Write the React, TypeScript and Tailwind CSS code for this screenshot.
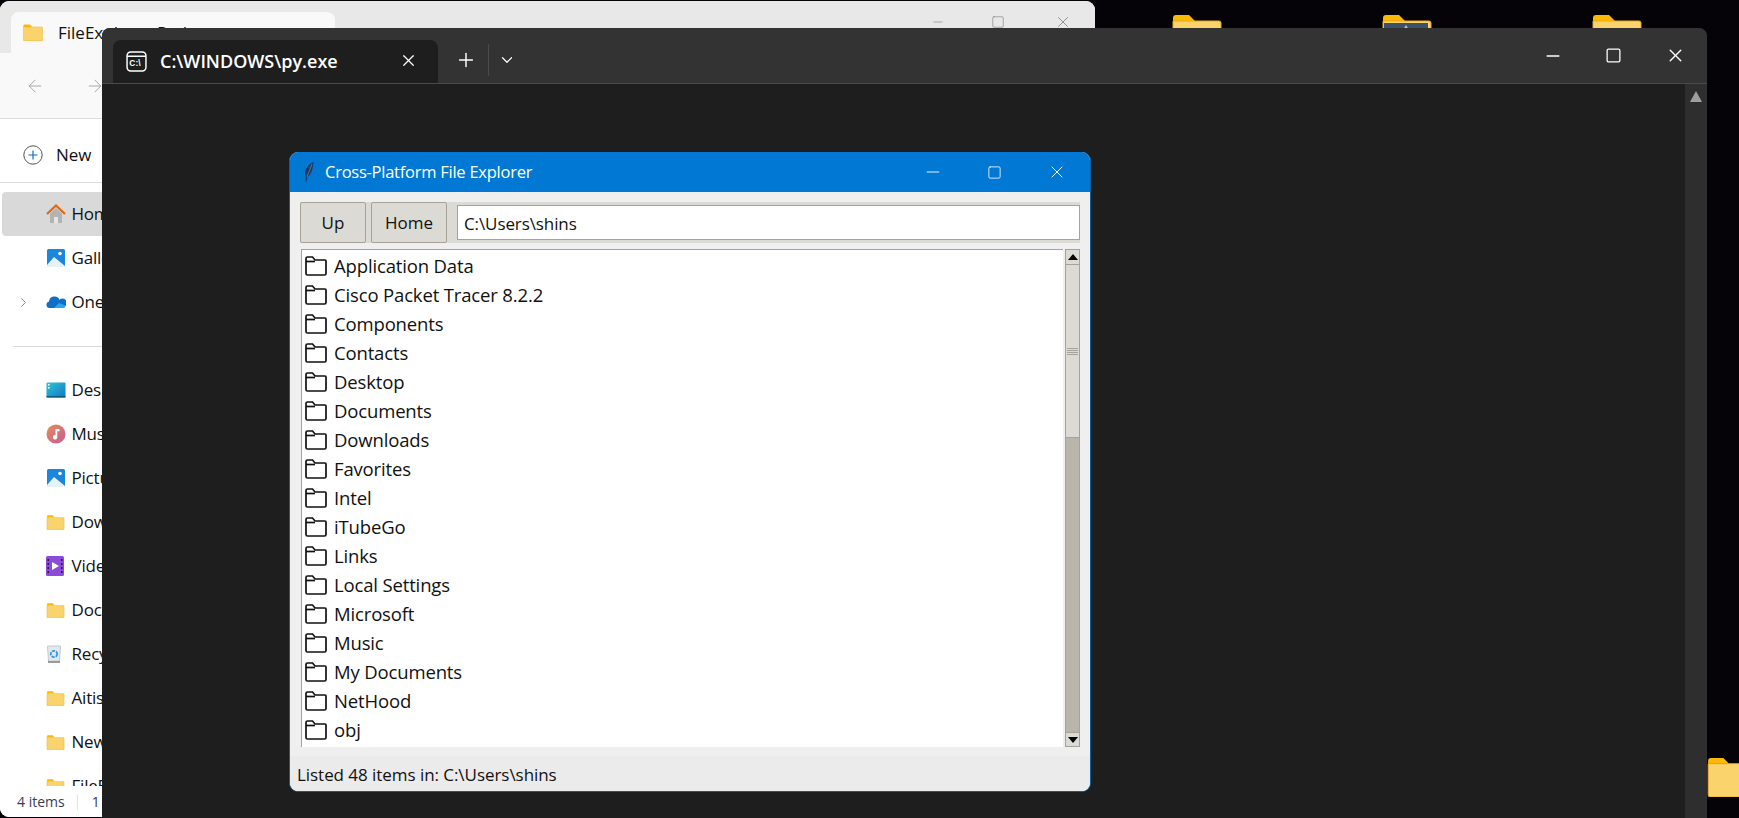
import { ChevronDown, ChevronRight, Plus, X, Minus, Square, ArrowLeft, ArrowRight } from "lucide-react";

const font = { fontFamily: '"Open Sans", "Noto Sans", sans-serif' };

const entries = [
  "Application Data",
  "Cisco Packet Tracer 8.2.2",
  "Components",
  "Contacts",
  "Desktop",
  "Documents",
  "Downloads",
  "Favorites",
  "Intel",
  "iTubeGo",
  "Links",
  "Local Settings",
  "Microsoft",
  "Music",
  "My Documents",
  "NetHood",
  "obj",
];

const YellowFolder = ({ className, inner }: { className: string; inner?: "doc" | "photo" }) => (
  <svg viewBox="0 0 50 42" className={className}>
    <path d="M1 4a3 3 0 0 1 3-3h13l6 6h-22z" fill="#fdb900" />
    <path d="M1 7h46a2 2 0 0 1 2 2v31a2 2 0 0 1-2 2H3a2 2 0 0 1-2-2z" fill="#fbd36c" stroke="#e9a91c" strokeWidth="1" />
    {inner === "doc" && <path d="M16 16h10l6 6v20H16z" fill="#fdf6e3" />}
    {inner === "photo" && (
      <>
        <rect x="2" y="9" width="44" height="30" fill="#3d5268" />
        <path d="M6 39l18-28 7 11 5-3 9 20z" fill="#a9bccd" />
      </>
    )}
  </svg>
);

const HomeIcon = () => (
  <svg viewBox="0 0 20 20" className="h-[20px] w-[20px]">
    <path d="M4 9.5V19h12V9.5L10 4z" fill="#b3b3b3" />
    <path d="M8 19v-6h4v6z" fill="#e6e6e6" />
    <path d="M1 10l9-8.5 9 8.5" fill="none" stroke="#e0680f" strokeWidth="2.2" />
  </svg>
);

const GalleryIcon = () => (
  <svg viewBox="0 0 20 20" className="h-[20px] w-[20px]">
    <rect x="1" y="1" width="18" height="18" rx="1.5" fill="#1c86dc" />
    <circle cx="14" cy="5.5" r="1.8" fill="#fff" />
    <path d="M1 17l7-8 11 9v1H1z" fill="#e6f2fb" />
  </svg>
);

const CloudIcon = () => (
  <svg viewBox="0 0 20 14" className="h-[14px] w-[20px]">
    <path d="M3.5 13A3.3 3.3 0 0 1 3 6.5 5.5 5.5 0 0 1 13.5 4.8 4.2 4.2 0 0 1 19.5 11a3 3 0 0 1-2.5 2z" fill="#0f6fc6" />
    <path d="M8 13l5-5 6.5 2.5A3 3 0 0 1 17 13z" fill="#2ba6ea" />
  </svg>
);

const DesktopIcon = () => (
  <svg viewBox="0 0 20 16" className="h-[16px] w-[20px]">
    <defs>
      <linearGradient id="desk" x1="0" y1="0" x2="1" y2="1">
        <stop offset="0" stopColor="#2cc4d8" />
        <stop offset="1" stopColor="#1478c0" />
      </linearGradient>
    </defs>
    <rect x="0.5" y="0.5" width="19" height="15" rx="1" fill="url(#desk)" />
    <rect x="0.5" y="14" width="19" height="1.5" fill="#0b5a84" />
    <rect x="2" y="2" width="1.6" height="1.6" fill="#fff" />
    <rect x="2" y="5" width="1.6" height="1.6" fill="#fff" />
  </svg>
);

const MusicIcon = () => (
  <svg viewBox="0 0 20 20" className="h-[20px] w-[20px]">
    <defs>
      <linearGradient id="music" x1="0" y1="0" x2="1" y2="1">
        <stop offset="0" stopColor="#ec8a55" />
        <stop offset="1" stopColor="#c05f9a" />
      </linearGradient>
    </defs>
    <circle cx="10" cy="10" r="9.5" fill="url(#music)" />
    <path d="M9.5 5h4v2.2h-2.2v6a2.2 2.2 0 1 1-1.8-2.1z" fill="#fff" />
  </svg>
);

const VideoIcon = () => (
  <svg viewBox="0 0 18 20" className="h-[20px] w-[18px]">
    <rect width="18" height="20" rx="1.5" fill="#8b4ad8" />
    <path d="M6 6l7 4-7 4z" fill="#fff" />
    <path d="M1.5 3h1.5v2H1.5zm0 4h1.5v2H1.5zm0 4h1.5v2H1.5zm0 4h1.5v2H1.5zm13.5-12h1.5v2H15zm0 4h1.5v2H15zm0 4h1.5v2H15zm0 4h1.5v2H15z" fill="#2b1553" />
  </svg>
);

const BinIcon = () => (
  <svg viewBox="0 0 16 18" className="h-[18px] w-[16px]">
    <path d="M1.5 1h13l-1 15h-11z" fill="#e4e8ec" stroke="#b8bcc0" strokeWidth="0.8" />
    <rect x="2" y="16" width="12" height="2" fill="#9a9a9a" />
    <circle cx="8" cy="9" r="3.2" fill="none" stroke="#2a9ae6" strokeWidth="1.8" strokeDasharray="3.2 1" />
  </svg>
);

const smallFolder = <YellowFolder className="h-[15px] w-[19px]" />;

const sideTop = [
  { name: "Home", icon: <HomeIcon />, active: true },
  { name: "Gallery", icon: <GalleryIcon /> },
  { name: "OneDrive", icon: <CloudIcon />, chevron: true },
];

const sideBottom = [
  { name: "Desktop", icon: <DesktopIcon /> },
  { name: "Music", icon: <MusicIcon /> },
  { name: "Pictures", icon: <GalleryIcon /> },
  { name: "Downloads", icon: smallFolder },
  { name: "Videos", icon: <VideoIcon /> },
  { name: "Documents", icon: smallFolder },
  { name: "Recycle Bin", icon: <BinIcon /> },
  { name: "Aitisal", icon: smallFolder },
  { name: "New folder", icon: smallFolder },
  { name: "FileExplorer", icon: smallFolder },
];

type SideRow = { name: string; icon: React.ReactNode; active?: boolean; chevron?: boolean };

const SideItem = ({ item }: { item: SideRow }) => (
  <div className={`relative ml-[2px] flex h-[44px] shrink-0 items-center rounded-l-[4px] pl-[44px] text-[17px] tracking-[-0.2px] whitespace-nowrap text-[#111] ${item.active ? "bg-[#d9d9d9]" : ""}`}>
    {item.chevron && <ChevronRight className="absolute left-[14px] h-[15px] w-[15px] text-[#777]" strokeWidth={1.5} />}
    <span className="flex w-[25.5px] shrink-0 justify-start">{item.icon}</span>
    <span>{item.name}</span>
  </div>
);

const TkButton = ({ label, className }: { label: string; className: string }) => (
  <button className={`flex h-[41px] items-center justify-center rounded-[2px] border border-[#a5a298] bg-[#dcdad5] pt-[1px] text-[17px] text-[#111] ${className}`}>
    {label}
  </button>
);

const ListFolder = () => (
  <svg viewBox="0 0 22 20" className="h-[20px] w-[22px] shrink-0" fill="none" stroke="#111" strokeWidth="1.7">
    <path d="M1 5V2.5A1.5 1.5 0 0 1 2.5 1h5L10 4h10a1 1 0 0 1 1 1v12.5a1.5 1.5 0 0 1-1.5 1.5h-17A1.5 1.5 0 0 1 1 17.5z" />
    <path d="M1 5.5h9" />
  </svg>
);

const Feather = () => (
  <svg viewBox="0 0 10 20" className="h-[20px] w-[10px]">
    <path d="M9.5 0C4 2 1 7 1 12c0 1.5.5 2.5 1 3L1.5 19.5h1L3.5 15c3.5-2 6-9 6-15z" fill="#1c3c66" />
    <path d="M8 2L3 15" stroke="#7f9bbd" strokeWidth="0.6" />
  </svg>
);

const App = () => {
  return (
    <div className="relative h-[818px] w-[1739px] overflow-hidden bg-[#050308]" style={font}>
      {/* desktop icons */}
      <YellowFolder inner="doc" className="absolute top-[14px] left-[1172px] h-[42px] w-[50px]" />
      <YellowFolder inner="photo" className="absolute top-[14px] left-[1382px] h-[42px] w-[50px]" />
      <YellowFolder inner="doc" className="absolute top-[14px] left-[1592px] h-[42px] w-[50px]" />
      <YellowFolder className="absolute top-[757px] left-[1707px] h-[40px] w-[48px]" />
      <span className="absolute top-[812px] left-[1708px] text-[14px] whitespace-nowrap text-white">AWO</span>

      {/* file explorer window behind */}
      <div className="absolute top-[1px] left-0 flex h-[816px] w-[1095px] flex-col overflow-hidden rounded-t-[9px] rounded-bl-[9px] bg-white">
        <div className="relative flex h-[52px] shrink-0 items-end bg-[#e8e8e8] pl-[11px]">
          <div className="flex h-[41px] w-[324px] items-center rounded-t-[8px] bg-[#f9f9f9] pl-[12px] text-[17px] text-[#111]">
            <YellowFolder className="h-[17px] w-[20px]" />
            <span className="ml-[15px]">FileExplorer-Path</span>
            <X className="mr-[20px] ml-auto h-[14px] w-[14px] text-[#555]" />
          </div>
          <div className="ml-auto flex items-center self-start pt-[12px] text-[#777]">
            <Minus className="mr-[46px] h-[14px] w-[14px]" strokeWidth={1} />
            <Square className="mr-[49px] h-[14px] w-[14px]" strokeWidth={1} />
            <X className="mr-[23px] h-[18px] w-[18px]" strokeWidth={1} />
          </div>
        </div>
        <div className="flex h-[66px] shrink-0 items-center gap-[40px] border-b border-[#dcdcdc] bg-[#f9f9f9] pl-[25px] text-[#aaa]">
          <ArrowLeft className="h-[20px] w-[20px]" strokeWidth={1.2} />
          <ArrowRight className="h-[20px] w-[20px]" strokeWidth={1.2} />
        </div>
        <div className="flex h-[64px] shrink-0 items-center border-b border-[#dcdcdc] pt-[8px] pl-[23px] text-[17px] text-[#111]">
          <svg viewBox="0 0 20 20" className="h-[20px] w-[20px]">
            <circle cx="10" cy="10" r="9.2" fill="none" stroke="#555" strokeWidth="1" />
            <path d="M10 5.5v9M5.5 10h9" stroke="#0a6fc9" strokeWidth="1.2" />
          </svg>
          <span className="ml-[13px]">New</span>
        </div>
        <div className="flex min-h-0 flex-1 flex-col overflow-hidden pt-[9px]">
          {sideTop.map((item) => (
            <SideItem key={item.name} item={item} />
          ))}
          <div className="mt-[22px] mb-[21px] ml-[13px] h-px shrink-0 bg-[#d9d9d9]" />
          {sideBottom.map((item) => (
            <SideItem key={item.name} item={item} />
          ))}
        </div>
        <div className="flex h-[31px] shrink-0 items-center bg-white pl-[17px] text-[14px] text-[#3b3b55]">
          <span>4 items</span>
          <span className="mr-[14px] ml-[12px] h-[16px] w-px bg-[#e4e4e4]" />
          <span>1 item selected</span>
        </div>
      </div>

      {/* terminal window */}
      <div className="absolute top-[28px] left-[102px] flex h-[790px] w-[1605px] flex-col overflow-hidden rounded-t-[8px] bg-[#1e1e1e]">
        <div className="flex h-[56px] shrink-0 items-end border-b border-[#4a4a4a] bg-[#333333] pl-[11px] text-white">
          <div className="flex h-[43px] w-[325px] items-center rounded-t-[8px] bg-[#1e1e1e] pl-[13px]">
            <svg viewBox="0 0 20 20" className="h-[21px] w-[21px]" fill="none" stroke="#fff" strokeWidth="1.4">
              <rect x="1" y="1" width="18" height="18" rx="3.5" />
              <path d="M1 5h18" />
              <text x="3.2" y="14.5" fill="#fff" stroke="none" fontSize="8" fontWeight="700" fontFamily="Liberation Sans">C:\</text>
            </svg>
            <span className="ml-[13px] text-[18px] font-semibold">C:\WINDOWS\py.exe</span>
            <X className="mr-[20px] mb-[2px] ml-auto h-[19px] w-[19px]" strokeWidth={1.5} />
          </div>
          <div className="mb-[7px] flex h-[32px] items-center">
            <Plus className="ml-[17px] h-[22px] w-[22px]" strokeWidth={1.6} />
            <span className="ml-[11px] h-[32px] w-px bg-[#4c4c4c]" />
            <ChevronDown className="ml-[9px] h-[18px] w-[18px]" strokeWidth={1.6} />
          </div>
          <div className="mb-[17px] ml-auto flex items-center">
            <Minus className="mr-[42px] h-[20px] w-[20px]" strokeWidth={1.8} />
            <Square className="mr-[43px] h-[17px] w-[17px]" strokeWidth={1.8} />
            <X className="mr-[21px] h-[21px] w-[21px]" strokeWidth={1.6} />
          </div>
        </div>
        <div className="flex min-h-0 flex-1 justify-end">
          <div className="flex w-[22px] justify-center bg-[#2e2e2e] pt-[7px]">
            <span className="h-0 w-0 border-x-[6px] border-b-[11px] border-x-transparent border-b-[#9e9e9e]" />
          </div>
        </div>
      </div>

      {/* tk app window */}
      <div className="absolute top-[152px] left-[289px] flex h-[640px] w-[802px] flex-col overflow-hidden rounded-[9px] border-x border-b border-[#0f5c99] bg-[#efefef]">
        <div className="flex h-[40px] shrink-0 items-center bg-[#0078d4] pl-[14px] text-[16.5px] tracking-[-0.25px] text-white">
          <Feather />
          <span className="ml-[11px]">Cross-Platform File Explorer</span>
          <div className="ml-auto flex items-center">
            <Minus className="mr-[44px] h-[20px] w-[20px]" strokeWidth={1.1} />
            <Square className="mr-[45px] h-[15px] w-[15px]" strokeWidth={1.3} />
            <X className="mr-[23px] h-[20px] w-[20px]" strokeWidth={1.1} />
          </div>
        </div>
        <div className="flex flex-1 flex-col pt-[10px] pr-[10px] pl-[10px]">
          <div className="flex h-[41px] shrink-0 items-center bg-[#dcdad5]">
            <TkButton label="Up" className="w-[66px]" />
            <TkButton label="Home" className="ml-[5px] w-[76px]" />
            <input
              readOnly
              value="C:\Users\shins"
              className="ml-[10px] h-[35px] min-w-0 flex-1 border border-[#a5a298] bg-white pt-[1px] pl-[6px] text-[17px] tracking-[-0.1px] text-[#111] outline-none"
            />
          </div>
          <div className="mt-[6px] ml-[1px] flex h-[498px] shrink-0">
            <div className="min-w-0 flex-1 overflow-hidden border-t border-l border-[#a5a298] bg-white pt-[1px] pl-[3px]">
              {entries.map((name) => (
                <div key={name} className="flex h-[29px] items-center gap-[7px] text-[18.5px] tracking-[-0.15px] whitespace-nowrap text-[#111]">
                  <ListFolder />
                  <span>{name}</span>
                </div>
              ))}
            </div>
            <div className="ml-[2px] flex w-[15px] shrink-0 flex-col border border-[#a5a298] bg-[#bab5ab]">
              <div className="flex h-[14px] shrink-0 items-center justify-center bg-[#dcdad5]">
                <span className="h-0 w-0 border-x-[5px] border-b-[6px] border-x-transparent border-b-black" />
              </div>
              <div className="flex h-[174px] shrink-0 items-center justify-center border-y border-[#a5a298] bg-[#dcdad5]">
                <div className="flex w-[11px] flex-col gap-[1px]">
                  <span className="h-px bg-[#a5a298]" />
                  <span className="h-px bg-[#a5a298]" />
                  <span className="h-px bg-[#a5a298]" />
                  <span className="h-px bg-[#a5a298]" />
                </div>
              </div>
              <div className="mt-auto flex h-[14px] shrink-0 items-center justify-center border-t border-[#a5a298] bg-[#dcdad5]">
                <span className="h-0 w-0 border-x-[5px] border-t-[6px] border-x-transparent border-t-black" />
              </div>
            </div>
          </div>
        </div>
        <div className="flex h-[35px] shrink-0 items-center bg-[#ebebeb] pt-[3px] pl-[7px] text-[17px] tracking-[-0.05px] text-[#111]">
          Listed 48 items in: C:\Users\shins
        </div>
      </div>
    </div>
  );
};

export default App;
